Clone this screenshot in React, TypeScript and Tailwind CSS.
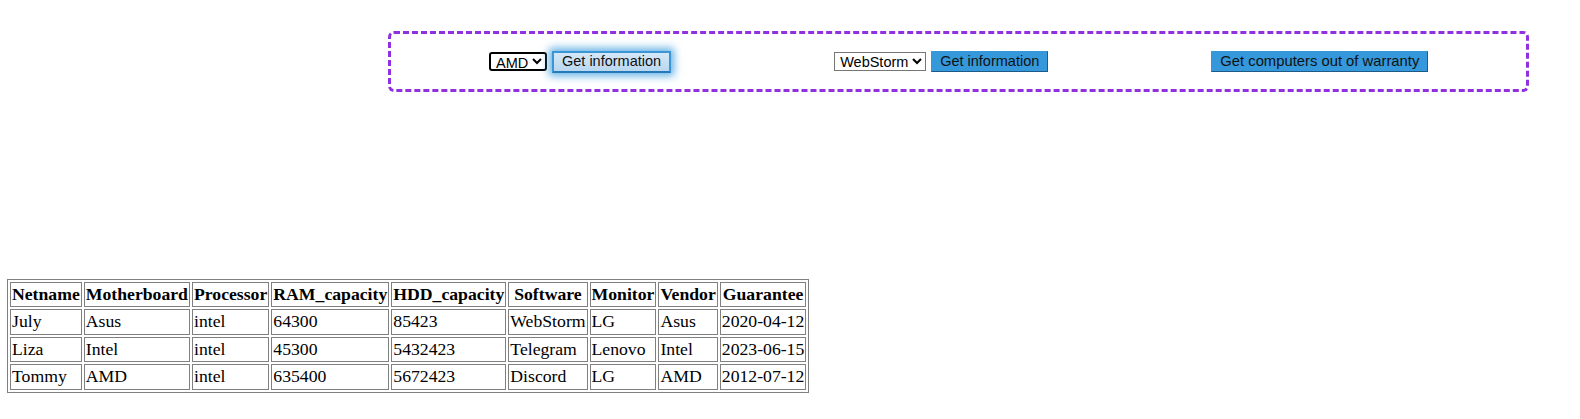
import React from 'react';

type Computer = {
  netname: string;
  motherboard: string;
  processor: string;
  ram: string;
  hdd: string;
  software: string;
  monitor: string;
  vendor: string;
  guarantee: string;
};

const columns = ['Netname', 'Motherboard', 'Processor', 'RAM_capacity', 'HDD_capacity', 'Software', 'Monitor', 'Vendor', 'Guarantee'];

const computers: Computer[] = [
  { netname: 'July', motherboard: 'Asus', processor: 'intel', ram: '64300', hdd: '85423', software: 'WebStorm', monitor: 'LG', vendor: 'Asus', guarantee: '2020-04-12' },
  { netname: 'Liza', motherboard: 'Intel', processor: 'intel', ram: '45300', hdd: '5432423', software: 'Telegram', monitor: 'Lenovo', vendor: 'Intel', guarantee: '2023-06-15' },
  { netname: 'Tommy', motherboard: 'AMD', processor: 'intel', ram: '635400', hdd: '5672423', software: 'Discord', monitor: 'LG', vendor: 'AMD', guarantee: '2012-07-12' },
];

const btn =
  "h-[21px] px-[8px] text-[14.5px] leading-none text-[#111] bg-[#3498db] border border-t-[#3498db] border-l-[#3498db] border-b-[#1d5a85] border-r-[#1d5a85] font-['Liberation_Sans',Arial,sans-serif]";

const App: React.FC = () => {
  return (
    <div className="p-2 bg-white min-h-[419px]">
      {/* Controls */}
      <div className="ml-[380px] mt-[23px] w-[1141px] h-[61px] border-[3px] border-dashed border-[#9030e0] rounded-[6px] flex items-center pl-[98px] gap-[163px] font-['Liberation_Sans',Arial,sans-serif]">
        <div className="flex items-center gap-[5px]">
          <select className="h-[19px] py-0 text-[14.5px] leading-[13px] border-2 border-black rounded-[3px] pl-[1px] text-black" defaultValue="AMD">
            <option>AMD</option>
            <option>Intel</option>
            <option>Asus</option>
          </select>
          <button className="h-[22px] px-[8px] text-[14.5px] leading-none text-[#111] bg-gradient-to-b from-[#d6e8f6] to-[#b9d7f0] border-2 border-[#3a96d6] border-b-[#2479b8] shadow-[0_0_8px_3px_rgba(52,152,219,0.75)]">
            Get information
          </button>
        </div>
        <div className="flex items-center gap-[5px]">
          <select className="h-[19px] py-0 text-[14.5px] leading-[14px] border border-[#767676] pl-[1px] text-black" defaultValue="WebStorm">
            <option>WebStorm</option>
            <option>Telegram</option>
            <option>Discord</option>
          </select>
          <button className={btn}>Get information</button>
        </div>
        <button className="h-[21px] px-[8px] text-[14.8px] leading-none text-[#111] bg-[#3498db] border border-t-[#3498db] border-l-[#3498db] border-b-[#1d5a85] border-r-[#1d5a85]">
          Get computers out of warranty
        </button>
      </div>

      {/* Table */}
      <table className="-ml-px mt-[187px] border-separate border-spacing-[2px] border border-[#808080] font-['Liberation_Serif','Times_New_Roman',serif] text-[17.7px] leading-[21.4px] text-black">
        <thead>
          <tr>
            {columns.map((c) => (
              <th key={c} className="border border-[#808080] p-px text-center font-bold">
                {c}
              </th>
            ))}
          </tr>
        </thead>
        <tbody>
          {computers.map((pc) => (
            <tr key={pc.netname}>
              {[pc.netname, pc.motherboard, pc.processor, pc.ram, pc.hdd, pc.software, pc.monitor, pc.vendor, pc.guarantee].map((v, i) => (
                <td key={i} className="border border-[#808080] p-px">
                  {v}
                </td>
              ))}
            </tr>
          ))}
        </tbody>
      </table>
    </div>
  );
};

export default App;
